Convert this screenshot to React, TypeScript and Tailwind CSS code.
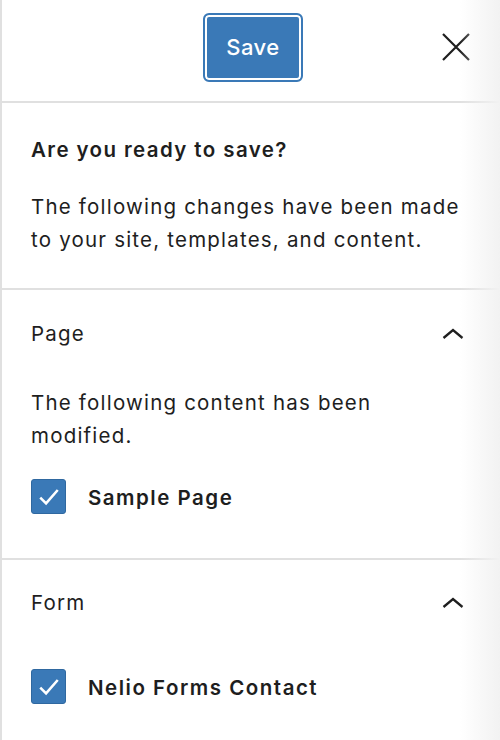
import React from 'react';

const font = { fontFamily: 'Inter, "Noto Sans", sans-serif' };

const Chevron = () => (
  <svg width="24" height="24" viewBox="0 0 24 24" className="shrink-0">
    <path d="M2.5 16 L12 8 L21.5 16" fill="none" stroke="#1e1e1e" strokeWidth="2.3" />
  </svg>
);

const Check = ({ label }: { label: string }) => (
  <label className="flex items-center gap-[22px]">
    <span className="flex h-[35px] w-[35px] items-center justify-center rounded-[3px] border border-[#2f68a0] bg-[#3a79b7]">
      <svg width="28" height="28" viewBox="0 0 24 24">
        <path d="M4.5 12.5 L9.5 17.5 L19.5 6" fill="none" stroke="#fff" strokeWidth="2.2" />
      </svg>
    </span>
    <span className="pt-[3px] text-[20.5px] font-semibold leading-[30px] tracking-[1.5px] text-[#1e1e1e]">{label}</span>
  </label>
);

export default function App() {
  return (
    <div className="relative h-[740px] w-[500px] overflow-hidden border-l-2 border-[#e0e0e0] bg-white" style={font}>
      <div className="flex h-[103px] items-start border-b-2 border-[#e0e0e0] pt-[13px]">
        <button className="ml-[201px] h-[69px] w-[100px] rounded-[6px] border-2 border-[#3a79b7] bg-[#3a79b7] text-[22px] font-medium tracking-[0.5px] text-white shadow-[inset_0_0_0_2px_#ffffff]">
          Save
        </button>
        <svg width="28" height="28" viewBox="0 0 28 28" className="ml-auto mr-[30px] mt-[20px]">
          <path d="M1 1 L27 27 M27 1 L1 27" stroke="#1e1e1e" strokeWidth="2.2" />
        </svg>
      </div>

      <div className="border-b-2 border-[#e0e0e0] px-[29px] pt-[32px] pb-[32px]">
        <h2 className="text-[20.5px] font-semibold leading-[30px] tracking-[1.4px] text-[#1e1e1e]">Are you ready to save?</h2>
        <p className="mt-[25px] text-[20.5px] leading-[33px] tracking-[1.2px] text-[#1e1e1e]">
          The following changes have been made to your site, templates, and content.
        </p>
      </div>

      <div className="border-b-2 border-[#e0e0e0] px-[29px] pt-[29px] pb-[44px]">
        <div className="flex items-center justify-between pr-[6px]">
          <span className="text-[20.5px] leading-[30px] tracking-[1.2px] text-[#1e1e1e]">Page</span>
          <Chevron />
        </div>
        <p className="mt-[37px] text-[20.5px] leading-[33px] tracking-[1.2px] text-[#1e1e1e]">
          The following content has been modified.
        </p>
        <div className="mt-[27px]">
          <Check label="Sample Page" />
        </div>
      </div>

      <div className="px-[29px] pt-[28px]">
        <div className="flex items-center justify-between pr-[6px]">
          <span className="text-[20.5px] leading-[30px] tracking-[1.2px] text-[#1e1e1e]">Form</span>
          <Chevron />
        </div>
        <div className="mt-[51px]">
          <Check label="Nelio Forms Contact" />
        </div>
      </div>

      <div className="pointer-events-none absolute inset-y-0 right-0 w-[40px] bg-gradient-to-r from-transparent to-[#f2f2f2]" />
    </div>
  );
}
